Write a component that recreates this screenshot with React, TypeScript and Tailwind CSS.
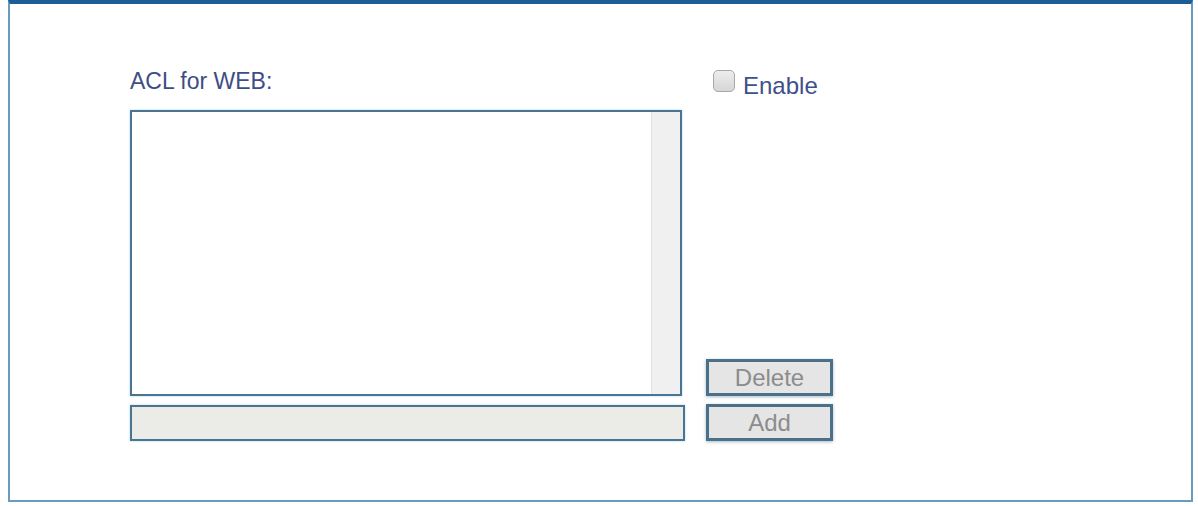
import React from 'react';

const App = () => {
  return (
    <div className="w-[1198px] h-[506px] bg-white" style={{ fontFamily: '"Liberation Sans", Arial, sans-serif' }}>
      <div className="ml-[8px] mr-[5px] h-[502px] border-x-2 border-b-2 border-[#6a9bbd] border-t-4 border-t-[#1e5c96] bg-white">
        <div className="flex pl-[120px] pt-[63px]">
          {/* Left column: list + entry field */}
          <div className="w-[555px]">
            <div className="h-[43px] text-[23px] leading-[28px] text-[#3e4e84]">ACL for WEB:</div>
            <div className="flex w-[552px] h-[286px] border-2 border-[#4a7590] bg-white shadow-[0_0_2px_#a9d2ea]">
              <div className="flex-1" />
              <div className="w-[29px] bg-[#f0f0f0] border-l border-[#e2e2e2]" />
            </div>
            <div className="mt-[9px] h-[36px] border-2 border-[#4a7590] bg-[#ebebe8] shadow-[0_0_2px_#a9d2ea]" />
          </div>

          {/* Right column: enable + buttons */}
          <div className="ml-[21px] flex w-[127px] flex-col">
            <label className="ml-[7px] mt-[2px] flex items-start whitespace-nowrap">
              <span className="mt-[1px] h-[22px] w-[22px] rounded-[5px] border border-[#a8a8a8] bg-gradient-to-b from-[#ededed] to-[#d6d6d6]" />
              <span className="ml-[8px] mt-[3px] text-[24px] leading-[28px] text-[#3f4f8c]">Enable</span>
            </label>
            <div className="flex-1" />
            <button className="h-[37px] w-[127px] border-[3px] border-[#4b7089] bg-[#e5e5e5] text-[24px] leading-none text-[#8c8c8c] shadow-[0_1px_3px_rgba(40,80,110,0.4)]">
              Delete
            </button>
            <button className="mt-[8px] h-[37px] w-[127px] border-[3px] border-[#4b7089] bg-[#e5e5e5] text-[24px] leading-none text-[#8c8c8c] shadow-[0_1px_3px_rgba(40,80,110,0.4)]">
              Add
            </button>
          </div>
        </div>
      </div>
    </div>
  );
};

export default App;
